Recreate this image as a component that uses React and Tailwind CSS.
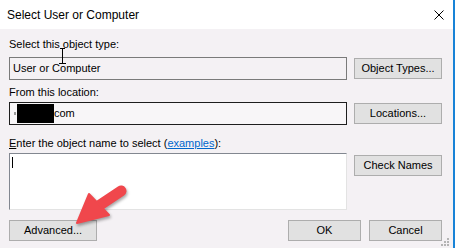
import React from 'react';

const font = { fontFamily: '"Liberation Sans", Arial, sans-serif' };

const Btn = ({ children, className = '' }) => (
  <button
    type="button"
    className={`h-[21px] border border-[#adadad] bg-[#e1e1e1] text-[11px] leading-none text-black ${className}`}
  >
    {children}
  </button>
);

const Arrow = () => (
  <svg
    className="pointer-events-none absolute left-0 top-0"
    width="455"
    height="248"
    style={{ filter: 'drop-shadow(1px 2px 1.5px rgba(0,0,0,0.35))' }}
  >
    <line x1="97" y1="207" x2="121" y2="191" stroke="#f0474c" strokeWidth="11" strokeLinecap="round" />
    <polygon points="89,194 77,223 109,215" fill="#f0474c" stroke="#f0474c" strokeWidth="2" strokeLinejoin="round" />
  </svg>
);

// mouse I-beam caught in the screenshot
const IBeam = () => (
  <svg className="pointer-events-none absolute left-0 top-0" width="80" height="70">
    <path d="M62.5 48 V63 M60 48.5 H65 M59 63.5 H66" stroke="#000" strokeWidth="1" fill="none" />
  </svg>
);

const Grip = () => (
  <svg width="9" height="9" className="absolute bottom-[2px] right-[4px]">
    {[
      [7, 1],
      [4, 4],
      [7, 4],
      [1, 7],
      [4, 7],
      [7, 7],
    ].map(([x, y]) => (
      <rect key={`${x}-${y}`} x={x} y={y} width="2" height="2" fill="#b4b4b4" />
    ))}
  </svg>
);

export default function App() {
  return (
    <div
      className="relative flex h-[248px] w-[455px] flex-col overflow-hidden border-r-2 border-[#1883d7] bg-[#f4f1f4] text-[11px] text-black"
      style={font}
    >
      {/* title bar */}
      <div className="flex h-[29px] items-center justify-between bg-white pl-[7px] pr-[9px]">
        <span className="text-[12px] text-black">Select User or Computer</span>
        <svg width="10" height="10" viewBox="0 0 10 10">
          <path d="M0.5 0.5 L9.5 9.5 M9.5 0.5 L0.5 9.5" stroke="#000" strokeWidth="1" />
        </svg>
      </div>

      <div className="flex flex-col pl-[9px]">
        <div className="mt-[9px] h-[13px] leading-[13px]">Select this object type:</div>
        <div className="mt-[6px] flex h-[23px] items-center gap-[7px]">
          <div className="flex h-[23px] w-[338px] items-center border border-[#7a7a7a] pl-[3px]">
            User or Computer
          </div>
          <Btn className="w-[88px]">Object Types...</Btn>
        </div>

        <div className="mt-[6px] h-[13px] leading-[13px]">From this location:</div>
        <div className="mt-[3px] flex h-[23px] items-center gap-[7px]">
          <div className="flex h-[23px] w-[338px] items-center border border-[#1e1e1e] bg-[#f8f6f8] pl-[4px]">
            <span className="mr-[1px] h-[3px] w-[2px] bg-[#9a9a9a]" />
            <span className="h-[19px] w-[37px] bg-black" />
            <span>com</span>
          </div>
          <Btn className="w-[88px]">Locations...</Btn>
        </div>

        <div className="mt-[12px] h-[13px] leading-[13px]">
          <span className="underline">E</span>nter the object name to select (
          <span className="text-[#0066cc] underline">examples</span>):
        </div>
        <div className="mt-[3px] flex items-start gap-[7px]">
          <div className="h-[57px] w-[338px] border border-b-[#e3e3e3] border-l-[#828790] border-r-[#e3e3e3] border-t-[#828790] bg-white pl-[2px] pt-[3px]">
            <div className="h-[11px] w-px bg-black" />
          </div>
          <Btn className="mt-[2px] w-[88px]">Check Names</Btn>
        </div>

        <div className="mt-[10px] flex items-center">
          <Btn className="w-[88px]">Advanced...</Btn>
          <div className="ml-[191px] flex gap-[8px]">
            <Btn className="w-[73px]">OK</Btn>
            <Btn className="w-[73px]">Cancel</Btn>
          </div>
        </div>
      </div>

      <IBeam />
      <Grip />
      <Arrow />
    </div>
  );
}
